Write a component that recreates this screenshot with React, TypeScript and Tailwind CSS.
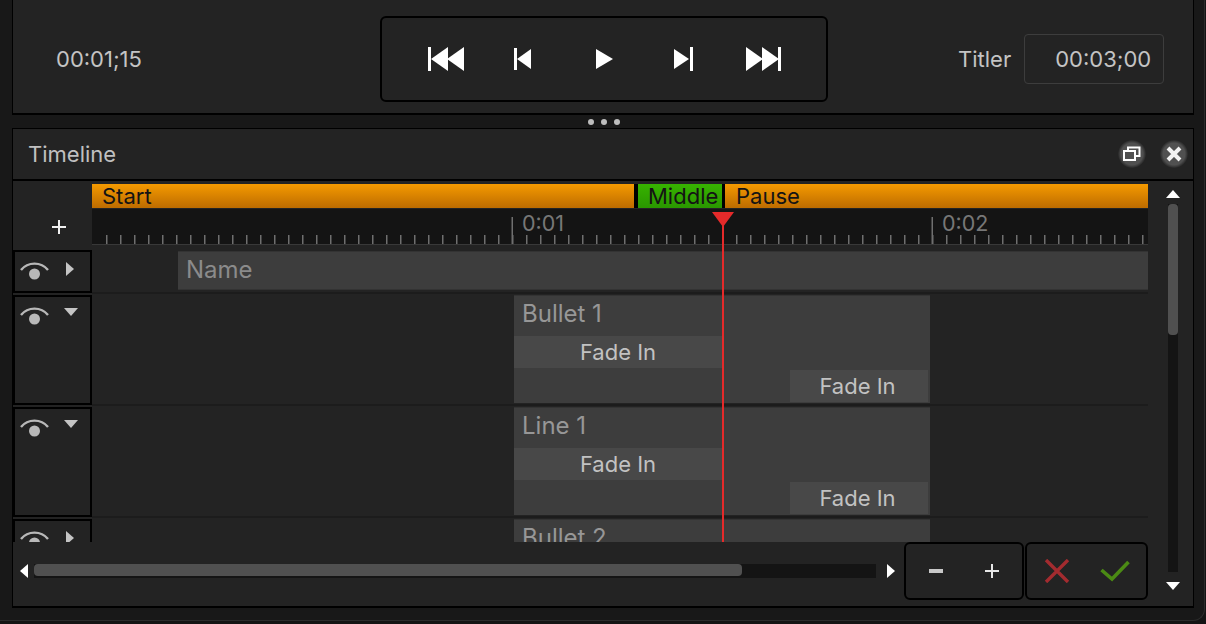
const FONT = 'font-["Inter","Liberation_Sans",sans-serif]';

function SkipStart() {
  return (
    <svg width="38" height="26" viewBox="0 0 38 26" fill="#fff" aria-hidden>
      <rect x="0" y="1" width="3" height="24" />
      <polygon points="3,13 20,1 20,25" />
      <polygon points="19,13 36,1 36,25" />
    </svg>
  );
}

function StepBack() {
  return (
    <svg width="20" height="26" viewBox="0 0 20 26" fill="#fff" aria-hidden>
      <rect x="1" y="2" width="3" height="22" />
      <polygon points="4,13 18,3 18,23" />
    </svg>
  );
}

function Play() {
  return (
    <svg width="20" height="26" viewBox="0 0 20 26" fill="#fff" aria-hidden>
      <polygon points="2,3 19,13 2,23" />
    </svg>
  );
}

function StepForward() {
  return (
    <svg width="22" height="26" viewBox="0 0 22 26" fill="#fff" aria-hidden>
      <polygon points="1,3 16,13 1,23" />
      <rect x="17" y="1" width="3" height="24" />
    </svg>
  );
}

function SkipEnd() {
  return (
    <svg width="38" height="26" viewBox="0 0 38 26" fill="#fff" aria-hidden>
      <polygon points="1,1 18,13 1,25" />
      <polygon points="17,1 34,13 17,25" />
      <rect x="33" y="1" width="3" height="24" />
    </svg>
  );
}

function Eye() {
  return (
    <svg width="30" height="20" viewBox="0 0 30 20" fill="none" aria-hidden>
      <path d="M1 9 C 8 0.5, 21 0.5, 28 9" stroke="#b8b8b8" strokeWidth="2.4" />
      <circle cx="14.5" cy="13" r="5.5" fill="#b8b8b8" />
    </svg>
  );
}

function Arrow({ dir, color = '#c4c4c4', w = 8, h = 14 }: { dir: 'up' | 'down' | 'left' | 'right'; color?: string; w?: number; h?: number }) {
  const points = {
    up: `0,${h} ${w / 2},0 ${w},${h}`,
    down: `0,0 ${w},0 ${w / 2},${h}`,
    left: `${w},0 ${w},${h} 0,${h / 2}`,
    right: `0,0 ${w},${h / 2} 0,${h}`,
  }[dir];
  return (
    <svg width={w} height={h} viewBox={`0 0 ${w} ${h}`} fill={color} aria-hidden>
      <polygon points={points} />
    </svg>
  );
}

function Gutter({ open, height }: { open: boolean; height: string }) {
  return (
    <div className={`flex w-[79px] shrink-0 items-start border-2 border-black pl-[5px] ${height}`}>
      <span className="mt-[9px]">
        <Eye />
      </span>
      <span className={open ? 'ml-[14px] mt-[11px]' : 'ml-[16px] mt-[10px]'}>
        {open ? <Arrow dir="down" w={14} h={8} /> : <Arrow dir="right" />}
      </span>
    </div>
  );
}

function Clip({ label }: { label: string }) {
  return (
    <div className="ml-[422px] flex h-[108px] w-[416px] flex-col border-t border-[#333] bg-[#3d3d3d]">
      <div className="flex h-[40px] items-center pb-[4px] pl-[8px] text-[24px] text-[#979797]">{label}</div>
      <div className="flex h-[32px] w-[208px] items-center justify-center bg-[#484848] text-[#c2c2c2]">Fade In</div>
      <div className="mt-[2px] flex h-[32px] justify-end pr-[2px]">
        <div className="flex w-[138px] items-center justify-center bg-[#484848] pr-[3px] text-[#c2c2c2]">Fade In</div>
      </div>
    </div>
  );
}

function Ruler() {
  const ticks = Array.from({ length: 75 }, (_, i) => i);
  return (
    <svg className="absolute inset-0" width="1056" height="36" aria-hidden>
      {ticks.map((i) => (
        <rect key={i} x={14 + i * 14} y="26" width="1.5" height="9" fill="#6f6f6f" />
      ))}
      <rect x="419.5" y="8" width="1.5" height="27" fill="#6f6f6f" />
      <rect x="839.5" y="8" width="1.5" height="27" fill="#6f6f6f" />
      <rect x="0" y="35" width="1056" height="1" fill="#383838" />
    </svg>
  );
}

export default function App() {
  return (
    <div className="h-[624px] w-[1206px] bg-[#141414]">
      <div className={`h-[621px] w-[1205px] overflow-hidden rounded-br-xl border-r border-b border-[#2c2c2c] bg-[#181818] pl-[12px] text-[22px] ${FONT}`}>
        {/* transport */}
        <div className="flex h-[115px] w-[1182px] items-center border-x border-b-2 border-black bg-[#232323] pt-[5px] text-[#c4c4c4]">
          <span className="ml-[43px] w-[324px]">00:01;15</span>
          <div className="flex h-[86px] w-[448px] items-center rounded-md border-2 border-black pl-[46px]">
            <SkipStart />
            <span className="ml-[47px]"><StepBack /></span>
            <span className="ml-[61px]"><Play /></span>
            <span className="ml-[59px]"><StepForward /></span>
            <span className="ml-[50px]"><SkipEnd /></span>
          </div>
          <span className="ml-[130px]">Titler</span>
          <div className="ml-[13px] flex h-[50px] w-[140px] items-center justify-end rounded border border-[#3d3d3d] pr-[12px]">00:03;00</div>
        </div>

        {/* splitter */}
        <div className="flex h-[13px] w-[1184px] items-center justify-center gap-[7px]">
          <span className="h-[6px] w-[6px] rounded-full bg-[#bdbdbd]" />
          <span className="h-[6px] w-[6px] rounded-full bg-[#bdbdbd]" />
          <span className="h-[6px] w-[6px] rounded-full bg-[#bdbdbd]" />
        </div>

        {/* timeline panel */}
        <div className="flex h-[480px] w-[1182px] flex-col border-x border-t border-b-2 border-black bg-[#232323]">
          <div className="flex h-[52px] shrink-0 items-center border-b-2 border-black pr-[5px] pl-[15px] text-[#c0c0c0]">
            <span className="flex-1">Timeline</span>
            <div className="flex h-[28px] w-[28px] items-center justify-center rounded-full bg-[radial-gradient(circle,#505050_55%,transparent_72%)]">
              <svg width="18" height="16" viewBox="0 0 18 16" fill="none" stroke="#fff" strokeWidth="2" aria-hidden>
                <rect x="1" y="5" width="11" height="9" />
                <path d="M5 5 V1.5 H16.5 V10 H12" />
              </svg>
            </div>
            <div className="ml-[14px] flex h-[28px] w-[28px] items-center justify-center rounded-full bg-[radial-gradient(circle,#505050_55%,transparent_72%)]">
              <svg width="16" height="16" viewBox="0 0 16 16" stroke="#f2f2f2" strokeWidth="4" aria-hidden>
                <path d="M2 2 L14 14 M14 2 L2 14" />
              </svg>
            </div>
          </div>

          <div className="flex min-h-0 flex-1">
            <div className="flex w-[1135px] shrink-0 flex-col">
              <div className="relative h-[361px] shrink-0 overflow-hidden">
                <div className="flex h-[69px]">
                  <div className="flex w-[79px] shrink-0 items-end justify-center pb-[16px] pl-[12px]">
                    <svg width="14" height="14" viewBox="0 0 14 14" fill="#f0f0f0" aria-hidden>
                      <rect x="6" y="0" width="2" height="14" />
                      <rect x="0" y="6" width="14" height="2" />
                    </svg>
                  </div>
                  <div className="flex-1 pt-[3px]">
                    <div className="flex h-[24px] text-[#141414]">
                      <div className="flex w-[542px] items-center bg-gradient-to-b from-[#f59a00] to-[#bd6c00] pl-[10px]">Start</div>
                      <div className="w-[4px] bg-black" />
                      <div className="flex w-[84px] items-center bg-gradient-to-b from-[#37b300] to-[#2a9700] pl-[10px]">Middle</div>
                      <div className="w-[3px] bg-black" />
                      <div className="flex flex-1 items-center bg-gradient-to-b from-[#f59a00] to-[#bd6c00] pl-[11px]">Pause</div>
                    </div>
                    <div className="relative mt-[1px] h-[36px] bg-[#141414] text-[21.5px] text-[#777]">
                      <Ruler />
                      <span className="absolute top-[-2px] left-[430px]">0:01</span>
                      <span className="absolute top-[-2px] left-[850px]">0:02</span>
                    </div>
                  </div>
                </div>

                <div className="flex h-[44px]">
                  <Gutter open={false} height="h-[43px]" />
                  <div className="flex-1 border-b-2 border-[#1c1c1c] pt-[1px]">
                    <div className="ml-[86px] flex h-[39px] items-center border-y border-[#333] bg-[#3d3d3d] pb-[2px] pl-[8px] text-[24px] text-[#8b8b8b]">Name</div>
                  </div>
                </div>
                <div className="flex h-[112px]">
                  <Gutter open height="mt-[1px] h-[110px]" />
                  <div className="flex-1 border-b-2 border-[#1c1c1c] pt-[1px]">
                    <Clip label="Bullet 1" />
                  </div>
                </div>
                <div className="flex h-[112px]">
                  <Gutter open height="mt-[1px] h-[110px]" />
                  <div className="flex-1 border-b-2 border-[#1c1c1c] pt-[1px]">
                    <Clip label="Line 1" />
                  </div>
                </div>
                <div className="flex h-[112px]">
                  <Gutter open={false} height="mt-[1px] h-[110px]" />
                  <div className="flex-1 pt-[1px]">
                    <div className="ml-[422px] flex h-[40px] w-[416px] items-center border-t border-[#333] bg-[#3d3d3d] pb-[4px] pl-[8px] text-[24px] text-[#979797]">Bullet 2</div>
                  </div>
                </div>

                {/* playhead */}
                <div className="absolute top-[31px] bottom-0 left-[709px] flex w-[2px] justify-center bg-[#e52a2a]">
                  <svg className="absolute top-0 shrink-0" width="22" height="15" viewBox="0 0 22 15" fill="#e52a2a" aria-hidden>
                    <polygon points="0,0 22,0 11,15" />
                  </svg>
                </div>
              </div>

              <div className="flex items-start">
                <div className="flex h-[58px] w-[891px] shrink-0 items-center pl-[7px]">
                  <Arrow dir="left" color="#fff" />
                  <div className="ml-[6px] h-[14px] w-[842px] bg-[#141414]">
                    <div className="h-[12px] w-[708px] rounded-sm bg-[#505050]" />
                  </div>
                  <span className="ml-[11px] flex"><Arrow dir="right" color="#fff" /></span>
                </div>
                <div className="flex h-[58px] w-[120px] items-center justify-center gap-[42px] rounded-md border-2 border-black">
                  <span className="h-[4px] w-[14px] bg-[#c8c8c8]" />
                  <svg width="14" height="14" viewBox="0 0 14 14" fill="#e6e6e6" aria-hidden>
                    <rect x="6" y="0" width="2" height="14" />
                    <rect x="0" y="6" width="14" height="2" />
                  </svg>
                </div>
                <div className="ml-px flex h-[58px] w-[123px] items-center justify-center gap-[30px] rounded-md border-2 border-black">
                  <svg width="26" height="24" viewBox="0 0 26 24" stroke="#a32b2f" strokeWidth="3.4" aria-hidden>
                    <path d="M2 1 L24 23 M24 1 L2 23" />
                  </svg>
                  <svg width="30" height="22" viewBox="0 0 30 22" fill="none" stroke="#4b8a14" strokeWidth="3.6" aria-hidden>
                    <path d="M1.5 10 L12 19 L28.5 2" />
                  </svg>
                </div>
              </div>
            </div>

            {/* vertical scrollbar */}
            <div className="flex flex-1 flex-col items-center pt-[9px] pl-[5px]">
              <Arrow dir="up" color="#fff" w={14} h={8} />
              <div className="mt-[6px] h-[368px] w-[10px] bg-[#141414]">
                <div className="h-[131px] w-[10px] rounded-sm bg-[#505050]" />
              </div>
              <span className="mt-[10px] flex"><Arrow dir="down" color="#fff" w={14} h={8} /></span>
            </div>
          </div>
        </div>
      </div>
    </div>
  );
}
